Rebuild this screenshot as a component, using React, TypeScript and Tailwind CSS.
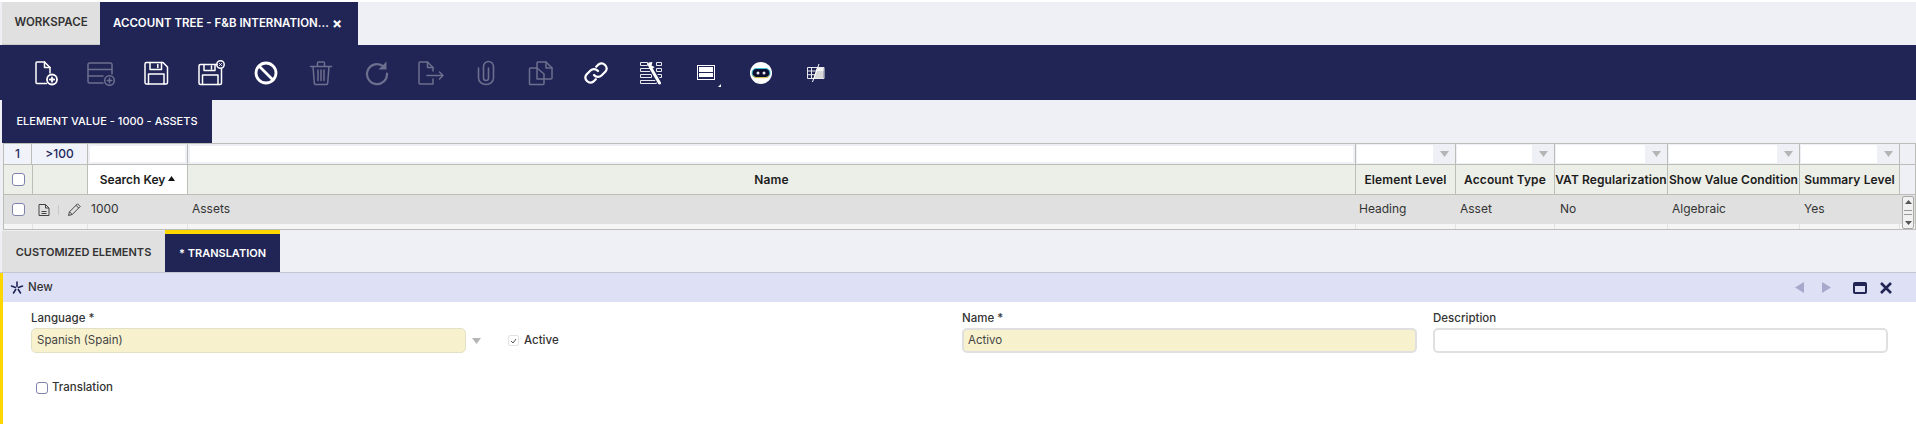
import type { ReactNode } from "react";

const navy = "#212556";
const rowCols = "grid grid-cols-[28px_56px_100px_1168px_100px_99px_113px_132px_100px_1fr]";

function Icon({ children, dim, size = 26 }: { children: ReactNode; dim?: boolean; size?: number }) {
  return (
    <svg width={size} height={26} viewBox={`0 0 ${size} 26`} fill="none" stroke="currentColor" strokeWidth="1.500" strokeLinejoin="round" strokeLinecap="round" className={dim ? "text-[#6c6f8d]" : "text-white"}>
      {children}
    </svg>
  );
}

const toolbar: ReactNode[] = [
  <Icon>
    <path d="M17 13V7.500L11.500 2H4a1 1 0 0 0-1 1v19.500a1 1 0 0 0 1 1h9.500" />
    <path d="M11.500 2v5.500H17" />
    <circle cx="19" cy="19.500" r="5" strokeWidth="1.800" />
    <path d="M19 17.300v4.400M16.800 19.500h4.400" strokeWidth="1.800" />
  </Icon>,
  <Icon dim size={28}>
    <path d="M16 23H2.500a1.500 1.500 0 0 1-1.500-1.500v-17A1.500 1.500 0 0 1 2.500 3h21A1.500 1.500 0 0 1 25 4.500V14" />
    <path d="M1 9.500h24M1 16h15" />
    <circle cx="22.500" cy="20.500" r="4.800" />
    <path d="M22.500 18.300v4.400M20.300 20.500h4.400" />
  </Icon>,
  <Icon>
    <path d="M2 4a1.500 1.500 0 0 1 1.500-1.500H20L24.500 7v15.500A1.500 1.500 0 0 1 23 24H3.500A1.500 1.500 0 0 1 2 22.500z" />
    <path d="M7 2.500v7h11.500v-7M14.800 4.500v3M5.500 24V14h15.500v10" />
  </Icon>,
  <Icon size={28}>
    <path d="M20 4.500H3.500A1.500 1.500 0 0 0 2 6v17a1.500 1.500 0 0 0 1.500 1.500H23a1.500 1.500 0 0 0 1.500-1.500V9" />
    <path d="M7 4.500v6h11v-6M14.500 6v3M5.500 24.500V15h15.500v9.500" />
    <circle cx="23.500" cy="4.500" r="3.700" />
    <path d="M22.500 3.500l2 2M24.500 3.500l-2 2" strokeWidth="1" />
  </Icon>,
  <Icon>
    <circle cx="13" cy="13" r="10" strokeWidth="2.800" />
    <path d="M6 6l14 14" strokeWidth="2.800" />
  </Icon>,
  <Icon dim>
    <path d="M2.500 6.500h21M9.500 6.500V3a1 1 0 0 1 1-1h5a1 1 0 0 1 1 1v3.500M5 6.500l1.300 16.500a1.500 1.500 0 0 0 1.500 1.500h10.400a1.500 1.500 0 0 0 1.500-1.500L21 6.500M10 10v10.500M13 10v10.500M16 10v10.500" />
  </Icon>,
  <Icon dim>
    <path d="M20.500 6.500a10 10 0 1 0 3.500 7" strokeWidth="2.200" />
    <path d="M23.500 1.500v8h-8z" fill="currentColor" stroke="none" />
  </Icon>,
  <Icon dim size={28}>
    <path d="M16 11V7.500L10.500 2H3a1 1 0 0 0-1 1v20a1 1 0 0 0 1 1h13v-5" />
    <path d="M10.500 2v5.500H16M10 15.500h16M22.500 12l3.500 3.500-3.500 3.500" />
  </Icon>,
  <Icon dim>
    <path d="M5.500 8v10a7.500 6.500 0 0 0 15 0V6.500a5 5 0 0 0-10 0V18a2.500 2.500 0 0 0 5 0V8" strokeWidth="1.600" />
  </Icon>,
  <Icon dim>
    <path d="M9 8H2.500a1 1 0 0 0-1 1v15a.5.5 0 0 0 .5.500h13a1 1 0 0 0 1-1V19" />
    <path d="M9 19V3a1 1 0 0 1 1-1h8l6 6v10a1 1 0 0 1-1 1z" />
    <path d="M18 2v6h6M9 8l7 6v5" />
  </Icon>,
  <Icon>
    <path d="M11 15a5 5 0 0 0 7.500.5l4-4a5 5 0 0 0-7-7l-2.300 2.300" strokeWidth="2.200" />
    <path d="M15 11a5 5 0 0 0-7.500-.5l-4 4a5 5 0 0 0 7 7l2.300-2.300" strokeWidth="2.200" />
  </Icon>,
  <svg width="24" height="24" viewBox="0 0 24 24" fill="none" stroke="#e8e8ee" strokeWidth="1">
    <path d="M1.500 1.500h7v3h-7zM1.500 7.500h10v3h-10zM1.500 13.500h11v3h-11zM1.500 19.500h16v3h-16zM17.500 1.500h5v3h-5zM17.500 7.500h5v3h-5zM17.500 13.500h5v3h-5z" />
    <path d="M12 7l8.500 15" stroke={navy} strokeWidth="5" />
    <path d="M11.500 6.500l9 15.500" stroke="#fff" strokeWidth="3" strokeLinecap="round" />
    <path d="M9.500 1.500c-1 2-.5 4 1 5.500 1.700 1 3.700.7 5-1l-3-1.500 1-3.500z" fill="#fff" stroke="none" />
  </svg>,
  <div className="relative">
    <div className="flex h-[15px] w-[18px] flex-col gap-px border border-white bg-[#212556] p-px">
      <div className="h-[5px] w-full bg-white"></div>
      <div className="h-[4px] w-full bg-white"></div>
    </div>
    <div className="absolute bottom-[-7px] right-[-6px] h-0 w-0 border-b-[3px] border-l-[3px] border-b-white border-l-transparent"></div>
  </div>,
  <svg width="22" height="22" viewBox="0 0 22 22">
    <circle cx="11" cy="11" r="11" fill="#fff" />
    <rect x="2" y="6.500" width="18" height="9" rx="4.500" fill="#0c1030" stroke="#38c6de" strokeWidth="1" />
    <path d="M3 13.500c1 1.800 2.500 2.200 4 2.200h8c1.500 0 3-.4 4-2.200" fill="none" stroke="#f2c230" strokeWidth="1" />
    <circle cx="8" cy="11" r="1.500" fill="#e8e8f0" />
    <circle cx="14" cy="11" r="1.500" fill="#e8e8f0" />
  </svg>,
  <svg width="20" height="20" viewBox="0 0 20 20" fill="none">
    <path d="M1.500 4.500h16.500v11H1.500zM1.500 8h9M1.500 11.700h8M5.500 4.500v11" stroke="#e8e8ee" strokeWidth="1" />
    <path d="M11 5h6.500v10H7.500z" fill="#d8d8d8" />
    <path d="M11 5h6.500v3h-7.500z" fill="#f4f4f4" />
    <path d="M13 1L6.500 19" stroke="#fff" strokeWidth="1" />
  </svg>,
];

function Checkbox({ size = "h-[12px] w-[12px]" }: { size?: string }) {
  return <div className={`${size} rounded-[3px] border border-[#7f84ad] bg-white`}></div>;
}

function Caret({ color = "#b5b5b5" }: { color?: string }) {
  return (
    <svg width="9" height="6" viewBox="0 0 9 6">
      <path d="M0 0h9L4.500 6z" fill={color} />
    </svg>
  );
}

function FilterCombo() {
  return (
    <div className="flex border-r border-[#bdbdb8] bg-[#eff0f5]">
      <div className="my-[1px] ml-[1px] flex-1 bg-white"></div>
      <div className="flex w-[22px] items-center justify-center">
        <Caret />
      </div>
    </div>
  );
}

function HeaderCell({ children }: { children: ReactNode }) {
  return <div className="flex items-center justify-center whitespace-nowrap border-r border-[#bdbdb8] text-[12px] font-semibold tracking-[0.1px] text-[#1c1c1c]">{children}</div>;
}

function DataCell({ children, pl }: { children: ReactNode; pl: string }) {
  return <div className={`flex items-center whitespace-nowrap pb-[2px] text-[12px] text-[#333] ${pl}`}>{children}</div>;
}

function Label({ children }: { children: ReactNode }) {
  return <div className="mb-[2px] h-[15px] text-[11.500px] font-medium leading-[15px] text-[#333]">{children}</div>;
}

export default function App() {
  return (
    <div className="flex h-[424px] w-[1916px] flex-col overflow-hidden bg-[#eff0f5] font-['Inter',sans-serif]">
      {/* main tabs */}
      <div className="flex h-[45px] items-stretch border-t-2 border-white pl-[2px]">
        <div className="flex w-[98px] items-center justify-center border-b border-[#c9c9c9] bg-[#e0e0e0] text-[11.500px] font-semibold text-[#333]">WORKSPACE</div>
        <div className="flex w-[258px] items-center bg-[#212556] pl-[13px] text-[11.500px] font-semibold text-white">
          <span className="w-[219px] whitespace-nowrap">ACCOUNT TREE - F&amp;B INTERNATION...</span>
          <span className="text-[15px] font-bold leading-none">×</span>
        </div>
      </div>

      {/* toolbar */}
      <div className="flex h-[55px] items-center bg-[#212556] pl-[18px]">
        {toolbar.map((icon, i) => (
          <div key={i} className="flex w-[55px] items-center justify-center">
            {icon}
          </div>
        ))}
      </div>

      {/* window title */}
      <div className="pl-[2px]">
        <div className="flex h-[43px] w-[210px] items-center justify-center bg-[#212556] text-[11px] font-medium text-white">ELEMENT VALUE - 1000 - ASSETS</div>
      </div>

      {/* grid */}
      <div className="relative ml-[3px] h-[87px] border border-[#bdbdb8] bg-[#f5f5f5]">
        <div className={`${rowCols} h-[21px] border-b border-[#bdbdb8] bg-[#eff0f5]`}>
          <div className="flex items-center justify-center border-r border-[#bdbdb8] bg-[#f0f3fa] text-[12px] font-medium text-[#23285a]">1</div>
          <div className="flex items-center justify-center border-r border-[#bdbdb8] bg-[#f0f3fa] text-[12px] font-medium text-[#23285a]">&gt;100</div>
          <div className="border-r border-[#bdbdb8] p-[2px]">
            <div className="h-full bg-white"></div>
          </div>
          <div className="border-r border-[#bdbdb8] p-[2px]">
            <div className="h-full bg-white"></div>
          </div>
          <FilterCombo />
          <FilterCombo />
          <FilterCombo />
          <FilterCombo />
          <FilterCombo />
          <div></div>
        </div>
        <div className={`${rowCols} h-[30px] border-b border-[#bdbdb8] bg-[#eceee8]`}>
          <div className="flex items-center justify-center">
            <Checkbox size="h-[13px] w-[13px]" />
          </div>
          <div className="border-x border-[#bdbdb8]"></div>
          <div className="flex items-center justify-center gap-[3px] border-r border-[#bdbdb8] bg-white text-[12px] font-semibold text-[#1c1c1c]">
            Search Key
            <svg width="7" height="5" viewBox="0 0 7 5" className="mb-[3px]">
              <path d="M0 5h7L3.500 0z" fill="#111" />
            </svg>
          </div>
          <HeaderCell>Name</HeaderCell>
          <HeaderCell>Element Level</HeaderCell>
          <HeaderCell>Account Type</HeaderCell>
          <HeaderCell>VAT Regularization</HeaderCell>
          <HeaderCell>Show Value Condition</HeaderCell>
          <HeaderCell>Summary Level</HeaderCell>
          <div className="bg-[#eff0f5]"></div>
        </div>
        <div className={`${rowCols} h-[29px] bg-[#e0e0e0]`}>
          <div className="flex items-center justify-center">
            <Checkbox size="h-[13px] w-[13px]" />
          </div>
          <div className="flex items-center gap-[8px] pl-[6px]">
            <svg width="12" height="14" viewBox="0 0 12 14" fill="none" stroke="#444" strokeWidth="1">
              <path d="M1 1.500h6.500L11 5v7.500H1z" />
              <path d="M7.500 1.500V5H11M3.500 8.500h5M3.500 10.500h5" />
            </svg>
            <div className="h-[10px] w-px bg-[#c8c8c8]"></div>
            <svg width="15" height="15" viewBox="0 0 15 15" fill="none" stroke="#444" strokeWidth="1">
              <path d="M1.500 13.500l1-3.700L10.500 1.800l2.700 2.700-8 8zM2.500 9.800l2.700 2.700M9 3.300l2.700 2.700" />
            </svg>
          </div>
          <DataCell pl="pl-[3px]">1000</DataCell>
          <DataCell pl="pl-[4px]">Assets</DataCell>
          <DataCell pl="pl-[3px]">Heading</DataCell>
          <DataCell pl="pl-[4px]">Asset</DataCell>
          <DataCell pl="pl-[5px]">No</DataCell>
          <DataCell pl="pl-[4px]">Algebraic</DataCell>
          <DataCell pl="pl-[4px]">Yes</DataCell>
          <div></div>
        </div>
        <div className={`${rowCols} h-[5px]`}>
          <div></div>
          <div className="border-x border-[#e3e3e3]"></div>
          <div className="border-r border-[#e3e3e3]"></div>
          <div className="border-r border-[#e3e3e3]"></div>
          <div className="border-r border-[#e3e3e3]"></div>
          <div className="border-r border-[#e3e3e3]"></div>
          <div className="border-r border-[#e3e3e3]"></div>
          <div className="border-r border-[#e3e3e3]"></div>
          <div className="border-r border-[#e3e3e3]"></div>
          <div></div>
        </div>
        {/* grid scrollbar */}
        <div className="absolute bottom-0 right-[1px] flex h-[33px] w-[12px] flex-col items-center justify-between rounded-[2px] border border-[#a8a8a8] bg-[#f1f1f1] py-[3px]">
          <svg width="7" height="4" viewBox="0 0 7 4">
            <path d="M0 4h7L3.500 0z" fill="#555" />
          </svg>
          <div className="h-[5px] w-[8px] border-y border-[#999]"></div>
          <svg width="7" height="4" viewBox="0 0 7 4">
            <path d="M0 0h7L3.500 4z" fill="#555" />
          </svg>
        </div>
      </div>

      {/* sub tabs */}
      <div className="flex h-[43px] border-b border-[#c6c6d0] pl-[2px]">
        <div className="mt-[1px] flex w-[163px] items-center justify-center bg-[#e0e0e0] pt-[1px] text-[11px] font-semibold text-[#333]">CUSTOMIZED ELEMENTS</div>
        <div className="flex w-[115px] items-center justify-center border-t-[4px] border-[#ffd600] bg-[#212556] text-[11px] font-semibold text-white">* TRANSLATION</div>
      </div>

      {/* form */}
      <div className="flex-1 border-l-[3px] border-[#ffd600] bg-white">
        <div className="flex h-[29px] items-center bg-[#dee0f6] pl-[7px] pr-[24px]">
          <svg width="14" height="14" viewBox="0 0 14 14" fill="none" stroke={navy} strokeWidth="1.600" strokeLinecap="round">
            <path d="M7 1v4.500M1.500 5l4 1.500M12.500 5l-4 1.500M3.500 12l2.200-3.500M10.500 12L8.300 8.500" />
          </svg>
          <span className="ml-[4px] text-[11.500px] font-medium text-[#333]">New</span>
          <div className="ml-auto flex items-center">
            <svg width="9" height="11" viewBox="0 0 9 11">
              <path d="M9 0v11L0 5.500z" fill="#a6a9cb" />
            </svg>
            <svg width="9" height="11" viewBox="0 0 9 11" className="ml-[18px]">
              <path d="M0 0v11l9-5.500z" fill="#a6a9cb" />
            </svg>
            <svg width="14" height="12" viewBox="0 0 14 12" className="ml-[22px]">
              <rect width="14" height="12" rx="2" fill={navy} />
              <rect x="2" y="4" width="10" height="6" fill="#dee0f6" />
            </svg>
            <svg width="12" height="12" viewBox="0 0 12 12" className="ml-[13px]" stroke={navy} strokeWidth="2.600">
              <path d="M1 1l10 10M11 1L1 11" />
            </svg>
          </div>
        </div>

        <div className="flex pl-[28px] pt-[9px]">
          <div className="w-[435px]">
            <Label>Language *</Label>
            <div className="flex h-[25px] items-center rounded-[5px] border border-[#e2e0c6] bg-[#f8f1ce] pl-[5px] text-[11.500px] text-[#444]">Spanish (Spain)</div>
          </div>
          <div className="mt-[17px] flex h-[25px] w-[496px] items-center pl-[6px]">
            <Caret />
            <div className="ml-[27px] flex h-[11px] w-[11px] items-center justify-center rounded-[2px] border border-[#e2e2e2]">
              <svg width="7" height="6" viewBox="0 0 7 6" fill="none" stroke="#555" strokeWidth="1">
                <path d="M1 3l2 2 3-4" />
              </svg>
            </div>
            <span className="ml-[5px] text-[11.500px] font-medium text-[#333]">Active</span>
          </div>
          <div className="w-[455px]">
            <Label>Name *</Label>
            <div className="flex h-[25px] items-center rounded-[5px] border-2 border-[#e0e0e0] bg-[#f8f1ce] pl-[4px] text-[11.500px] text-[#444]">Activo</div>
          </div>
          <div className="ml-[16px] w-[455px]">
            <Label>Description</Label>
            <div className="h-[25px] rounded-[5px] border-2 border-[#e0e0e0] bg-white"></div>
          </div>
        </div>

        <div className="mt-[26px] flex items-center pl-[33px]">
          <Checkbox />
          <span className="ml-[4px] text-[11.500px] font-medium text-[#333]">Translation</span>
        </div>
      </div>
    </div>
  );
}
